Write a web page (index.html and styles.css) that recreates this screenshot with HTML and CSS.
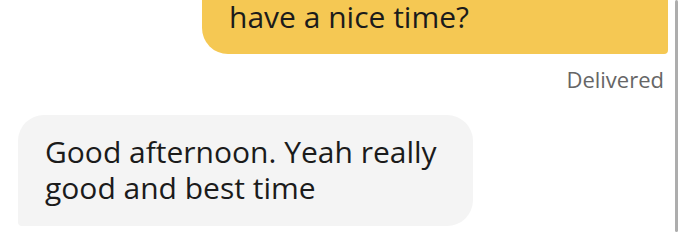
FILE: index.html
```html
<!DOCTYPE html>
<html lang="en">
<head>
  <meta charset="UTF-8">
  <meta name="viewport" content="width=device-width, initial-scale=1.0">
  <title>Chat</title>
  <link rel="stylesheet" href="styles.css">
</head>
<body>
  <div class="tela">
    <!-- MENSAGENS -->
    <div class="conversa">
      <div class="msg msg-enviada">
        <p>have a nice time?</p>
      </div>
      <div class="status">Delivered</div>
      <div class="msg msg-recebida">
        <p>Good afternoon. Yeah really good and best time</p>
      </div>
    </div>
    <!-- BARRA DE ROLAGEM -->
    <div class="rolagem"></div>
  </div>
</body>
</html>
```

FILE: styles.css
```css
/* === GERAL === */
* { margin: 0; padding: 0; box-sizing: border-box; font-family: 'Open Sans', sans-serif; }
body { background-color: #fff; color: #1b1b1b; width: 685px; height: 240px; overflow: hidden; }

.tela { display: flex; align-items: flex-start; }
.conversa { width: 675px; padding: 0 7px 0 18px; display: flex; flex-direction: column; }

/* === BOLHAS === */
.msg p { font-size: 30px; line-height: 36px; }
.msg-enviada {
  align-self: flex-end; width: 466px; background-color: #f5c853;
  padding: 2px 20px 22px 27px; border-radius: 0 0 4px 26px;
}
.msg-enviada p { line-height: 30px; }
.msg-recebida {
  align-self: flex-start; width: 455px; margin-top: 22px;
  background-color: #f4f4f4; padding: 19px 20px 20px 27px;
  border-radius: 26px 26px 26px 4px;
}

/* === STATUS === */
.status { align-self: flex-end; margin: 11px 4px 0 0; font-size: 22px; line-height: 28px; color: #666; }

/* === ROLAGEM === */
.rolagem { width: 3px; height: 232px; background-color: #adadad; border-radius: 2px; }
```
